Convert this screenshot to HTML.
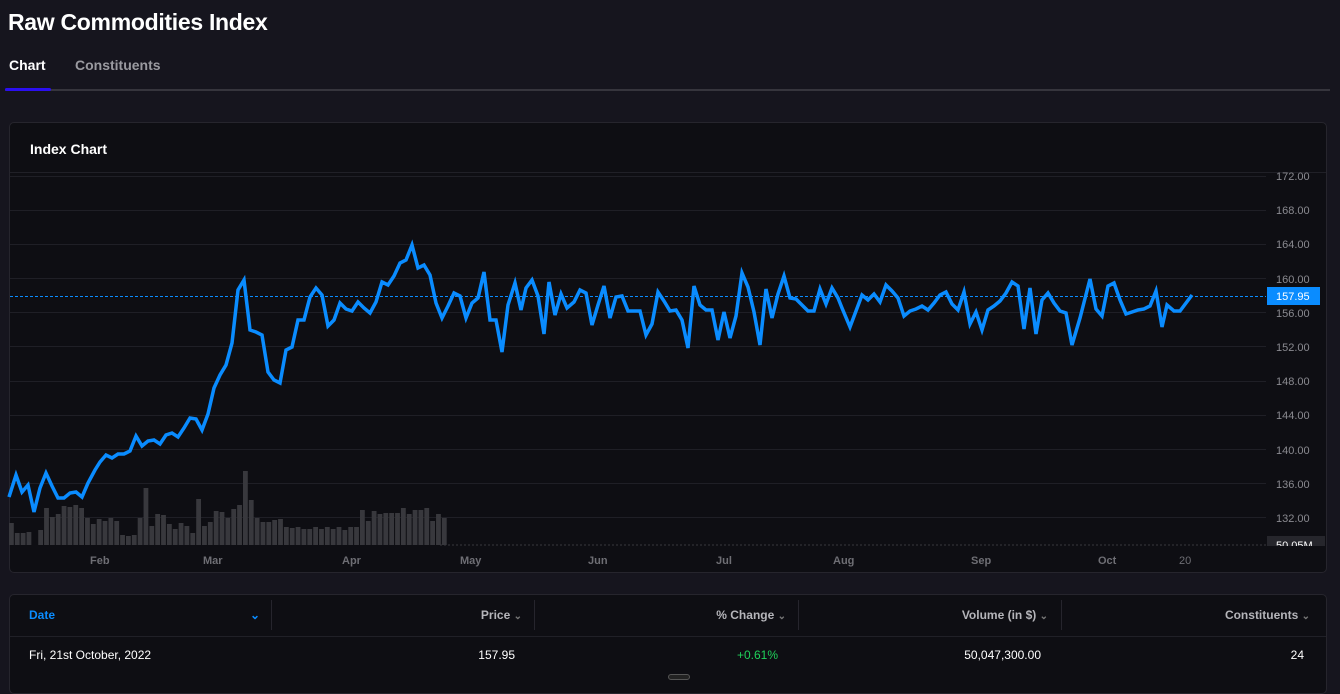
<!DOCTYPE html>
<html><head><meta charset="utf-8"><style>
*{margin:0;padding:0;box-sizing:border-box}
body{width:1340px;height:678px;overflow:hidden;background:#16151e;font-family:"Liberation Sans",sans-serif;color:#fff;position:relative}
.t{position:absolute;left:8px;top:9px;font-size:23px;font-weight:bold;letter-spacing:-0.3px}
.tab{position:absolute;top:57px;font-size:14px;font-weight:bold}
.line{position:absolute;left:5px;right:10px;top:89px;height:2px;background:#36353d}
.ind{position:absolute;left:5px;width:46px;top:88px;height:3px;background:#2b0ff0;border-radius:2px}
.card{position:absolute;left:9px;width:1318px;background:#0e0e13;border:1px solid #26252d;border-radius:5px}
.hdr{position:absolute;top:0;left:0;right:0;height:50px;border-bottom:1px solid #202027}
.th{position:absolute;top:608px;font-size:12px;font-weight:bold;color:#b5b5ba}
.th span{font-size:10px;color:#777}
.td{position:absolute;top:648px;font-size:12px;color:#fff}
.sep{position:absolute;top:600px;width:1px;height:30px;background:#26252d}
</style></head><body>
<div class="t">Raw Commodities Index</div>
<div class="tab" style="left:9px">Chart</div>
<div class="tab" style="left:75px;color:#9a9aa0">Constituents</div>
<div class="line"></div><div class="ind"></div>
<div class="card" style="top:122px;height:451px"><div class="hdr"></div>
<div style="position:absolute;left:20px;top:18px;font-size:14px;font-weight:bold">Index Chart</div></div>
<svg style="position:absolute;left:0;top:0" width="1340" height="678">
<defs><clipPath id="c"><rect x="1260" y="530" width="70" height="16"/></clipPath></defs>
<g stroke="#1f1f26" stroke-width="1">
<line x1="10" x2="1266" y1="176.5" y2="176.5"/><line x1="10" x2="1266" y1="210.5" y2="210.5"/><line x1="10" x2="1266" y1="244.5" y2="244.5"/><line x1="10" x2="1266" y1="278.5" y2="278.5"/><line x1="10" x2="1266" y1="312.5" y2="312.5"/><line x1="10" x2="1266" y1="346.5" y2="346.5"/><line x1="10" x2="1266" y1="381.5" y2="381.5"/><line x1="10" x2="1266" y1="415.5" y2="415.5"/><line x1="10" x2="1266" y1="449.5" y2="449.5"/><line x1="10" x2="1266" y1="483.5" y2="483.5"/><line x1="10" x2="1266" y1="517.5" y2="517.5"/>
</g>
<g fill="#38383d" id="v"></g>
<line x1="440" x2="1266" y1="545" y2="545" stroke="#38383d" stroke-dasharray="2,2"/>
<line x1="10" x2="1266" y1="296.5" y2="296.5" stroke="#0a8cff" stroke-dasharray="3,2"/>
<polyline fill="none" stroke="#0a8cff" stroke-width="3.5" stroke-linejoin="miter" points="9,497 16,475 22,492 28,485 34,512 40,488 46,473 52,486 58,498 64,498 70,493 76,492 82,497 88,483 95,470 100,462 106,455 112,458 118,454 124,454 130,451 136,436 142,446 148,441 154,440 160,444 166,435 172,433 178,437 184,428 190,418 196,419 202,430 208,414 214,388 220,375 226,365 232,343 238,290 244,280 250,330 256,332 262,335 268,372 274,380 280,383 286,350 292,347 298,320 304,320 310,297 316,288 322,295 328,326 334,320 340,303 346,309 352,311 358,302 364,308 370,313 376,302 382,282 388,285 394,276 400,263 406,260 412,245 418,268 424,265 430,275 436,303 442,318 448,306 454,293 460,296 466,318 472,303 478,298 484,272 490,320 496,320 502,352 508,305 515,283 521,310 526,288 532,280 538,296 544,334 549,282 555,315 561,294 567,308 574,302 580,290 586,293 592,325 598,305 604,286 610,318 616,297 622,296 628,311 634,311 640,311 646,335 652,324 658,292 664,301 670,311 676,310 682,320 688,348 694,286 700,305 706,310 712,310 718,340 724,312 730,338 736,316 742,273 748,287 754,312 760,345 766,289 772,318 778,294 784,276 790,298 796,299 802,305 808,311 814,311 820,289 826,304 832,288 838,298 842,308 850,327 862,295 868,300 874,294 880,302 886,285 892,291 898,298 904,316 910,311 916,309 922,306 928,310 934,303 940,295 946,292 952,304 958,310 964,292 970,324 976,312 982,330 988,310 994,306 1000,301 1006,293 1012,282 1018,286 1024,329 1030,288 1036,334 1042,300 1048,293 1054,303 1060,311 1066,313 1072,345 1080,318 1090,279 1096,309 1102,316 1108,286 1114,283 1120,300 1126,314 1132,312 1138,310 1144,309 1150,306 1156,291 1162,327 1167,305 1174,311 1180,311 1192,295"/>
<g font-family="Liberation Sans" font-size="11" fill="#8a8a90">
<text x="1276" y="180">172.00</text><text x="1276" y="214">168.00</text><text x="1276" y="248">164.00</text><text x="1276" y="283">160.00</text><text x="1276" y="317">156.00</text><text x="1276" y="351">152.00</text><text x="1276" y="385">148.00</text><text x="1276" y="419">144.00</text><text x="1276" y="454">140.00</text><text x="1276" y="488">136.00</text><text x="1276" y="522">132.00</text>
</g>
<rect x="1267" y="287" width="53" height="18" fill="#0a8cff"/>
<text x="1276" y="300" font-family="Liberation Sans" font-size="11" fill="#fff">157.95</text>
<g clip-path="url(#c)"><rect x="1267" y="536" width="58" height="12" fill="#26262c"/>
<text x="1276" y="549" font-family="Liberation Sans" font-size="11" fill="#fff">50.05M</text></g>
<g font-family="Liberation Sans" font-size="11" font-weight="bold" fill="#6e6e74">
<text x="90" y="564">Feb</text><text x="203" y="564">Mar</text><text x="342" y="564">Apr</text><text x="460" y="564">May</text><text x="588" y="564">Jun</text><text x="716" y="564">Jul</text><text x="833" y="564">Aug</text><text x="971" y="564">Sep</text><text x="1098" y="564">Oct</text><text x="1179" y="564" font-weight="normal">20</text>
</g>
</svg>
<div class="card" style="top:594px;height:100px"></div>
<div style="position:absolute;left:10px;right:14px;top:636px;height:1px;background:#202027"></div>
<div class="sep" style="left:271px"></div><div class="sep" style="left:534px"></div><div class="sep" style="left:798px"></div><div class="sep" style="left:1061px"></div>
<div class="th" style="left:29px;color:#0a8cff">Date</div><div class="th" style="left:250px;color:#0a8cff">⌄</div>
<div class="th" style="right:818px">Price <span>⌄</span></div>
<div class="th" style="right:554px">% Change <span>⌄</span></div>
<div class="th" style="right:292px">Volume (in $) <span>⌄</span></div>
<div class="th" style="right:30px">Constituents <span>⌄</span></div>
<div class="td" style="left:29px">Fri, 21st October, 2022</div>
<div class="td" style="right:825px">157.95</div>
<div class="td" style="right:562px;color:#1fd25a">+0.61%</div>
<div class="td" style="right:299px">50,047,300.00</div>
<div class="td" style="right:36px">24</div>
<div style="position:absolute;left:668px;top:674px;width:22px;height:6px;border:1px solid #555;border-radius:3px;background:#222"></div>
<script>
var h=[523,533,533,532,545,530,508,517,514,506,507,505,508,518,524,519,521,518,521,535,536,535,518,488,526,514,515,524,529,523,526,533,499,526,522,511,512,518,509,505,471,500,518,522,522,520,519,527,528,527,529,529,527,529,527,529,527,530,527,527,510,521,511,514,513,513,513,508,514,510,510,508,521,514,518];
var g=document.getElementById('v'),s='';
for(var i=0;i<h.length;i++){s+='<rect x="'+(9+i*5.85)+'" y="'+h[i]+'" width="4.8" height="'+(545-h[i])+'"/>';}
g.innerHTML=s;
</script>
</body></html>
